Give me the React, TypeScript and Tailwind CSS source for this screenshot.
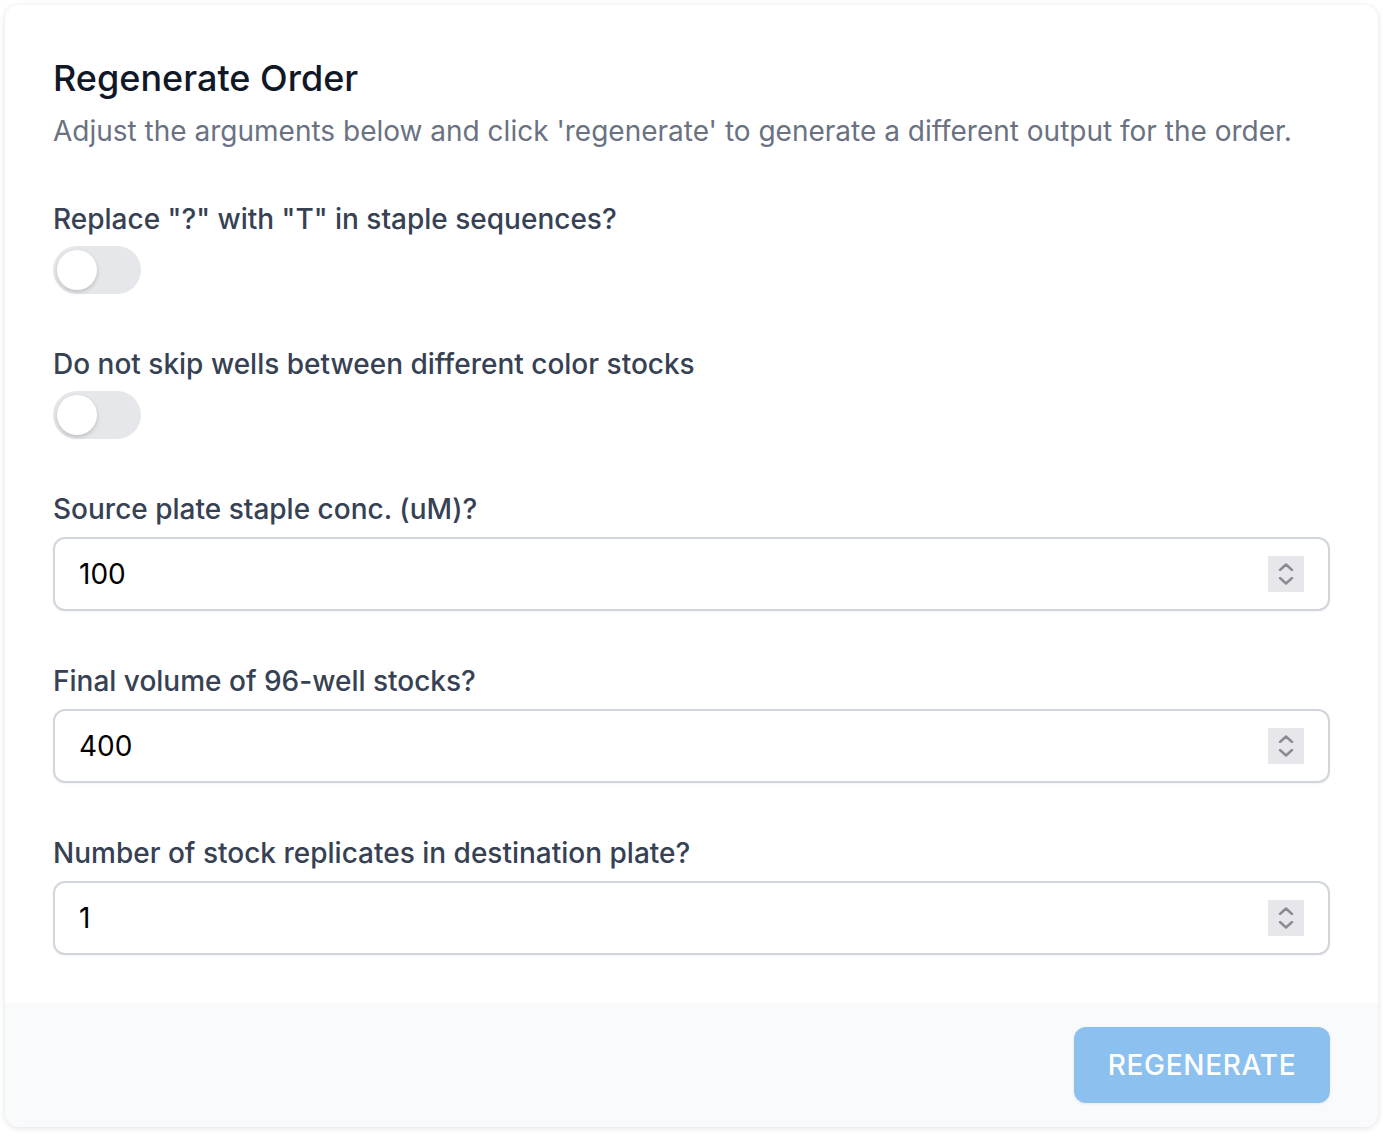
import { useState } from 'react'

function Toggle() {
  const [on, setOn] = useState(false)
  return (
    <button
      type="button"
      onClick={() => setOn(!on)}
      className={`mt-[7px] relative inline-flex h-12 w-[88px] shrink-0 rounded-full border-[4px] border-transparent ${on ? 'bg-blue-500' : 'bg-gray-200'}`}
    >
      <span
        className={`inline-block h-10 w-10 rounded-full bg-white shadow-[0_2px_4px_rgba(0,0,0,0.18)] ${on ? 'translate-x-10' : 'translate-x-0'}`}
      />
    </button>
  )
}

function NumberField({ label, value }: { label: string; value: string }) {
  return (
    <div>
      <label className="block text-[28px] leading-10 font-medium text-gray-700">{label}</label>
      <div className="mt-2 flex h-[74px] items-center rounded-[12px] border-2 border-gray-300 bg-white pl-6 pr-6 shadow-[0_1px_2px_rgba(0,0,0,0.05)]">
        <input
          type="text"
          defaultValue={value}
          className="w-full bg-transparent text-[28px] text-black outline-none"
        />
        <div className="flex h-9 w-9 shrink-0 flex-col items-center justify-center gap-[6px] bg-[#e6e6eb]">
          <svg width="16" height="8" viewBox="0 0 16 8" fill="none">
            <path d="M2 7 8 1.5 14 7" stroke="#8b8b96" strokeWidth="2.4" strokeLinecap="round" strokeLinejoin="round" />
          </svg>
          <svg width="16" height="8" viewBox="0 0 16 8" fill="none">
            <path d="M2 1 8 6.5 14 1" stroke="#8b8b96" strokeWidth="2.4" strokeLinecap="round" strokeLinejoin="round" />
          </svg>
        </div>
      </div>
    </div>
  )
}

export default function App() {
  return (
    <div className="min-h-screen bg-white p-[5px] font-['Inter',sans-serif]">
      <div className="overflow-hidden rounded-[14px] bg-white shadow-[0_1px_6px_rgba(0,0,0,0.12)]">
        <div className="px-12 pt-12 pb-12">
          <h2 className="text-[36px] leading-[50px] font-medium text-gray-900">Regenerate Order</h2>
          <p className="mt-2 text-[28px] leading-10 text-gray-500">
            Adjust the arguments below and click 'regenerate' to generate a different output for the order.
          </p>

          <div className="mt-12 flex flex-col gap-12">
            <div>
              <div className="text-[28px] leading-10 font-medium text-gray-700">Replace "?" with "T" in staple sequences?</div>
              <Toggle />
            </div>
            <div>
              <div className="text-[28px] leading-10 font-medium text-gray-700">Do not skip wells between different color stocks</div>
              <Toggle />
            </div>
            <div className="flex flex-col gap-[50px]">
              <NumberField label="Source plate staple conc. (uM)?" value="100" />
              <NumberField label="Final volume of 96-well stocks?" value="400" />
              <NumberField label="Number of stock replicates in destination plate?" value="1" />
            </div>
          </div>
        </div>

        <div className="flex justify-end bg-gray-50 px-12 py-6">
          <button
            type="button"
            disabled
            className="h-[76px] w-[256px] rounded-[12px] bg-[#8bc0ef] text-[28px] font-medium tracking-wide text-white shadow-[0_1px_3px_rgba(0,0,0,0.08)]"
          >
            REGENERATE
          </button>
        </div>
      </div>
    </div>
  )
}
